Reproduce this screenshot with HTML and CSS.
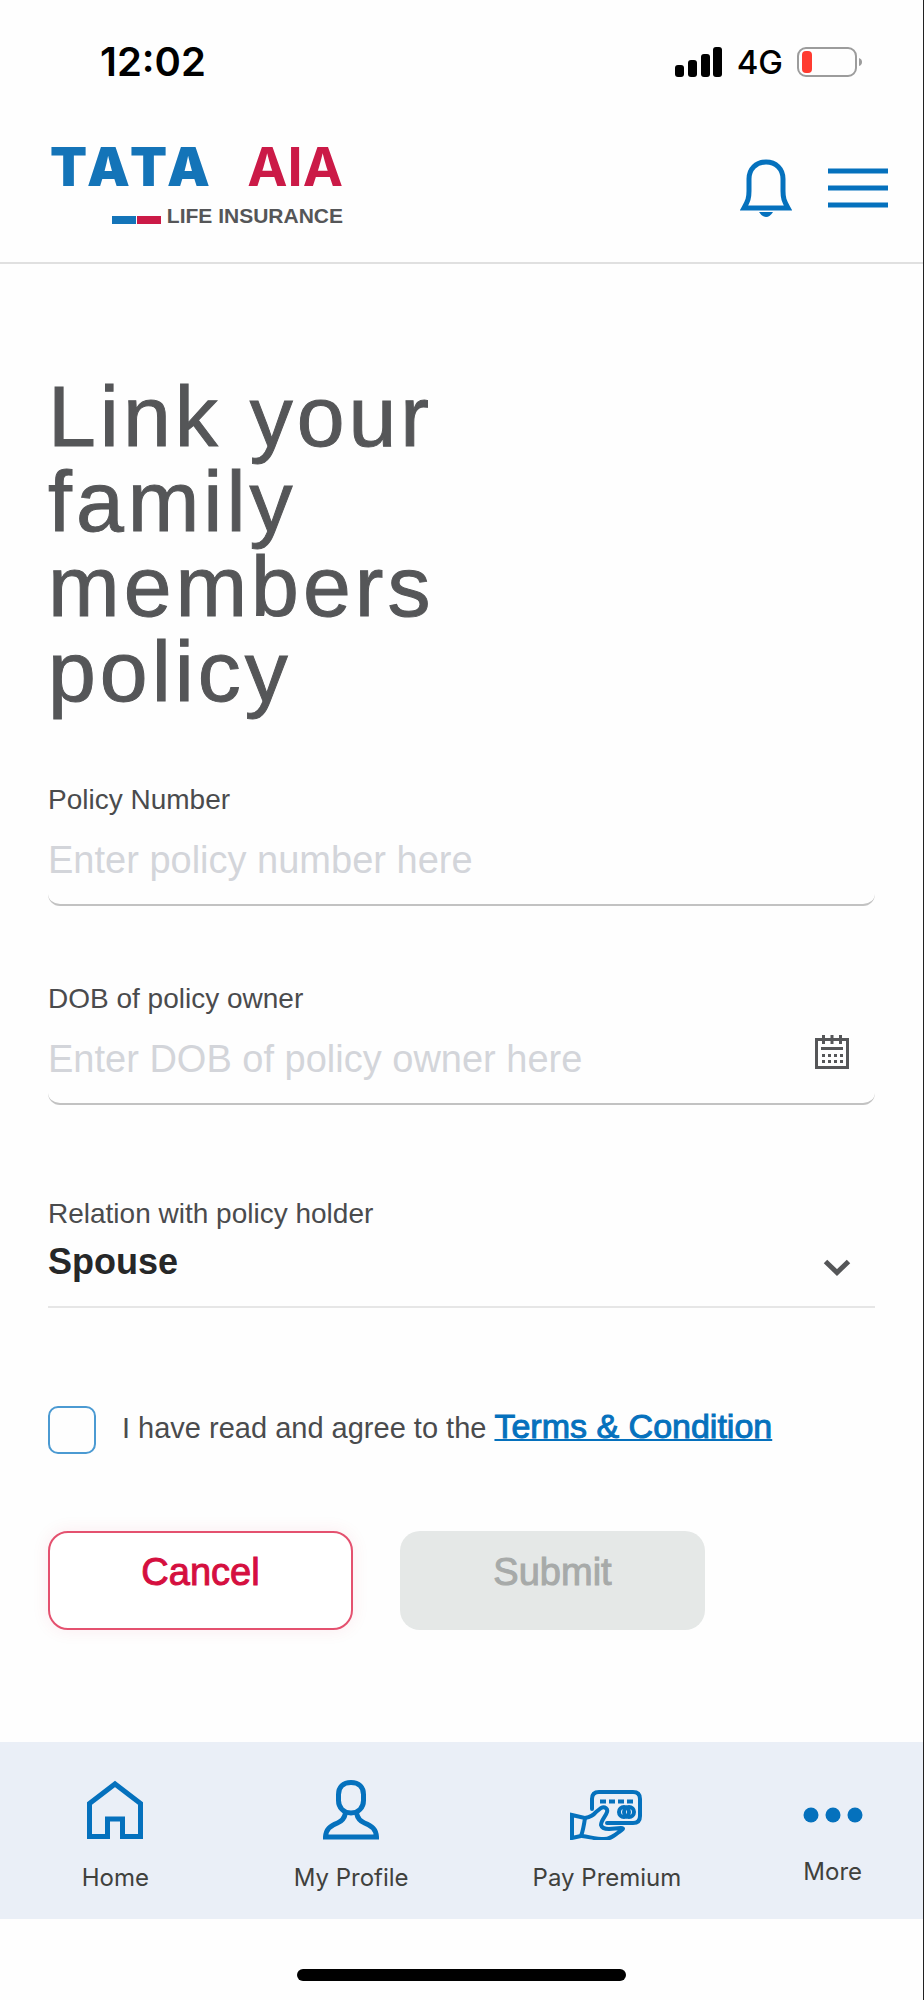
FILE: index.html
```html
<!DOCTYPE html>
<html lang="en">
<head>
  <meta charset="UTF-8">
  <meta name="viewport" content="width=device-width, initial-scale=1.0">
  <title>Link your family members policy</title>
  <link rel="stylesheet" href="styles.css">
</head>
<body>
  <div class="wrapper">
    <div class="status-bar">
      <span class="time">12:02</span>
      <div class="status-icons">
        <svg width="48" height="30" viewBox="0 0 48 30">
          <rect x="0" y="18" width="9" height="12" rx="3"/>
          <rect x="13" y="13" width="9" height="17" rx="3"/>
          <rect x="26" y="7" width="9" height="23" rx="3"/>
          <rect x="38" y="0" width="9" height="30" rx="3"/>
        </svg>
        <span class="network">4G</span>
        <svg width="66" height="30" viewBox="0 0 66 30">
          <rect x="1" y="1" width="58" height="28" rx="8" fill="none" stroke="#9c9c9c" stroke-width="2"/>
          <rect x="5" y="4" width="10" height="22" rx="4" fill="#ff3b30"/>
          <path d="M62 11q3 1 3 4t-3 4z" fill="#9c9c9c"/>
        </svg>
      </div>
    </div>

    <header class="header">
      <a class="logo" href="#">
        <span class="logo-name"><span class="tata">TATA</span><span class="aia">AIA</span></span>
        <span class="logo-sub"><i class="bar blue"></i><i class="bar red"></i><span>LIFE INSURANCE</span></span>
      </a>
      <div class="header-actions">
        <button class="icon-btn" aria-label="Notifications">
          <svg width="52" height="58" viewBox="0 0 52 58">
            <path d="M26 3C16 3 9 10 9 20v12c0 7-1 10-5 17h44c-4-7-5-10-5-17V20C43 10 36 3 26 3z" fill="none" stroke="#0571bd" stroke-width="5"/>
            <path d="M19 53h14q-3 5-7 5t-7-5z" fill="#0571bd"/>
          </svg>
        </button>
        <button class="icon-btn" aria-label="Menu">
          <svg width="60" height="40" viewBox="0 0 60 40">
            <path d="M0 3h60M0 20h60M0 37h60" stroke="#0571bd" stroke-width="5"/>
          </svg>
        </button>
      </div>
    </header>

    <main class="content">
      <h1>Link your family members policy</h1>
      <form>
        <div class="field">
          <label for="policy">Policy Number</label>
          <div class="input-box">
            <input type="text" id="policy" placeholder="Enter policy number here">
          </div>
        </div>
        <div class="field">
          <label for="dob">DOB of policy owner</label>
          <div class="input-box">
            <input type="text" id="dob" placeholder="Enter DOB of policy owner here">
            <button type="button" class="icon-btn" aria-label="Pick a date">
              <svg width="34" height="34" viewBox="0 0 34 34" fill="none" stroke="#555658">
                <path d="M1.500 4.500h31v28h-31z" stroke-width="3"/>
                <path d="M8.500 0v9M17 0v9M25.500 0v9" stroke-width="3"/>
                <path d="M6 13.500h22" stroke-width="3"/>
                <path d="M7 20.500h21M7 26.500h21" stroke-width="3" stroke-dasharray="3 3"/>
              </svg>
            </button>
          </div>
        </div>
        <div class="field relation">
          <label for="relation">Relation with policy holder</label>
          <div class="select-box">
            <select id="relation">
              <option>Spouse</option>
              <option>Child</option>
              <option>Parent</option>
            </select>
            <svg class="chevron" width="28" height="18" viewBox="0 0 28 18">
              <path d="M2.500 2.500L14 13.500l11.500-11" fill="none" stroke="#555658" stroke-width="5"/>
            </svg>
          </div>
        </div>
        <div class="agree">
          <input type="checkbox" id="agree">
          <p><label for="agree">I have read and agree to the</label> <a href="#">Terms &amp; Condition</a></p>
        </div>
        <div class="buttons">
          <button type="button" class="btn cancel">Cancel</button>
          <button type="submit" class="btn submit" disabled>Submit</button>
        </div>
      </form>
    </main>

    <nav class="tab-bar">
      <a href="#">
        <svg width="56" height="60" viewBox="0 0 56 60" fill="none" stroke="#0571bd" stroke-width="5">
          <path d="M2.500 56.500V23.500L28 4l25.500 19.500v33h-18V39h-15v17.500z"/>
        </svg>
        <span>Home</span>
      </a>
      <a href="#">
        <svg width="56" height="60" viewBox="0 0 56 60" fill="none" stroke="#0571bd" stroke-width="5">
          <path d="M28 2.500c-8 0-12.500 5-12.500 12v6c0 7 5 12.500 12.500 12.500s12.500-5.500 12.500-12.500v-6c0-7-4.500-12-12.500-12z"/>
          <path d="M22.500 33c-1 5-3 8-8 10C7 46 3 49 2.500 57h51C53 49 49 46 41.500 43c-5-2-7-5-8-10"/>
        </svg>
        <span>My Profile</span>
      </a>
      <a href="#">
        <svg width="74" height="60" viewBox="0 0 74 60" fill="none" stroke="#0571bd" stroke-width="4">
          <path d="M22 29V19q0-7 7-7h34q7 0 7 7v17q0 7-7 7H37" stroke-linecap="round"/>
          <path d="M30 21.500h34" stroke-dasharray="6 3"/>
          <circle cx="54" cy="32" r="5"/>
          <circle cx="59" cy="32" r="5"/>
          <path d="M15 38c5-1 8-2 11-6l5-4c4-2 7 1 6 4-1 4-6 8-6 13 1 4 5 4 8 4l12-1c4 0 1 2-2 4-5 4-9 7-15 7-8 0-14-2-22-3" stroke-linejoin="round"/>
          <path d="M2 35l13 3c-1 7-2 13-4 18l-9 2z"/>
        </svg>
        <span>Pay Premium</span>
      </a>
      <a href="#">
        <svg width="60" height="54" viewBox="0 0 60 54" fill="#0571bd">
          <circle cx="8" cy="35" r="7.500"/>
          <circle cx="30" cy="35" r="7.500"/>
          <circle cx="52" cy="35" r="7.500"/>
        </svg>
        <span>More</span>
      </a>
    </nav>
    <div class="home-indicator"></div>
  </div>
</body>
</html>
```

FILE: styles.css
```css
* {
  box-sizing: border-box;
}
body {
  margin: 0;
  background: #fefefe;
  color: #4a4b4d;
  font-family: "Liberation Sans", Arial, sans-serif;
  font-size: 28px;
}
button, input, select {
  font-family: inherit;
}
.wrapper {
  min-height: 100vh;
  display: flex;
  flex-direction: column;
  border-right: 1px solid #222;
}

/* status bar */
.status-bar {
  display: flex;
  align-items: center;
  justify-content: space-between;
  padding: 32px 60px 32px 100px;
  line-height: 60px;
  font-family: Inter, sans-serif;
  color: #000;
}
.time {
  font-size: 40px;
  font-weight: 600;
}
.status-icons {
  display: flex;
  align-items: center;
  gap: 14px;
}
.network {
  font-size: 33px;
  font-weight: 500;
}

/* header */
.header {
  display: flex;
  align-items: center;
  justify-content: space-between;
  padding: 23px 35px 34px 50px;
  border-bottom: 2px solid #e0e0e0;
}
.logo {
  width: 293px;
  text-decoration: none;
}
.logo-name {
  display: flex;
  justify-content: space-between;
  font-family: Inter, sans-serif;
  font-size: 54px;
  line-height: 40px;
  font-kerning: none;
}
.tata {
  color: #1474b8;
  font-weight: 900;
}
.aia {
  color: #cb1a47;
  font-weight: 700;
}
.logo-sub {
  display: flex;
  align-items: center;
  justify-content: flex-end;
  gap: 1px;
  margin-top: 17px;
  color: #555658;
  font-size: 21px;
  font-weight: bold;
  line-height: 24px;
}
.logo-sub span {
  margin-left: 5px;
}
.bar {
  width: 24px;
  height: 8px;
  margin-top: 8px;
}
.blue {
  background: #1474b8;
}
.red {
  background: #cb1a47;
}
.header-actions {
  display: flex;
  align-items: center;
  gap: 36px;
}
.icon-btn {
  display: flex;
  padding: 0;
  border: 0;
  background: none;
}

/* form */
.content {
  flex: 1;
  padding: 110px 48px 40px;
}
h1 {
  max-width: 440px;
  margin: 0 0 70px;
  color: #555658;
  font-size: 86px;
  font-weight: normal;
  line-height: 85px;
  letter-spacing: 4px;
  -webkit-text-stroke: 1px;
}
.field {
  margin-bottom: 77px;
}
.field label {
  display: block;
  line-height: 32px;
}
.input-box {
  display: flex;
  align-items: center;
  height: 90px;
  padding-right: 26px;
  border-bottom: 2px solid #c2c2c2;
  border-radius: 12px;
}
.input-box input {
  flex: 1;
  min-width: 0;
  padding: 0;
  border: 0;
  outline: 0;
  background: none;
  font-size: 38px;
}
.input-box input::placeholder {
  color: #d3d5da;
}
.input-box .icon-btn {
  margin-bottom: 14px;
}
.relation {
  padding-top: 16px;
  margin-bottom: 98px;
}
.select-box {
  display: flex;
  align-items: center;
  padding-right: 24px;
  border-bottom: 2px solid #e6e6e6;
}
.select-box select {
  flex: 1;
  height: 76px;
  padding: 0 0 14px;
  border: 0;
  appearance: none;
  background: none;
  color: #262728;
  font-size: 36px;
  font-weight: bold;
}
.agree {
  display: flex;
  gap: 26px;
  margin-bottom: 77px;
}
.agree input {
  flex: none;
  width: 48px;
  height: 48px;
  margin: 0;
  appearance: none;
  border: 2px solid #4b9ad2;
  border-radius: 10px;
}
.agree p {
  margin: 0;
  font-size: 29px;
  line-height: 40px;
}
.agree a {
  color: #0571bd;
  font-size: 34px;
  -webkit-text-stroke: 1px;
  text-decoration-thickness: 2px;
}
.buttons {
  display: flex;
  gap: 47px;
}
.btn {
  width: 305px;
  height: 99px;
  padding: 0 0 16px;
  border: 0;
  border-radius: 20px;
  font-size: 38px;
  -webkit-text-stroke: 1px;
}
.cancel {
  border: 2px solid #e4516f;
  background: #fff;
  color: #d50f3f;
  box-shadow: 0 0 18px rgba(213, 15, 63, 0.08);
}
.submit {
  background: #e5e8e7;
  color: #a7aaa9;
}

/* bottom tabs */
.tab-bar {
  display: grid;
  grid-template-columns: 23fr 24fr 27fr 18fr;
  padding: 38px 0 25px;
  background: #eaeff7;
}
.tab-bar a {
  display: flex;
  flex-direction: column;
  align-items: center;
  gap: 22px;
  color: #40413d;
  font-family: Inter, sans-serif;
  font-size: 24px;
  line-height: 32px;
  text-decoration: none;
}
.home-indicator {
  width: 329px;
  height: 12px;
  margin: 50px auto 19px;
  border-radius: 6px;
  background: #000;
}
```
